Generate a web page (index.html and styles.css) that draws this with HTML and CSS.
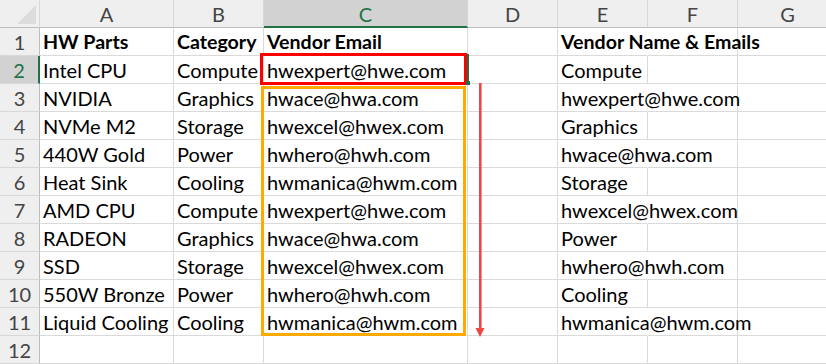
FILE: index.html
```html
<!DOCTYPE html>
<html>
<head>
<meta charset="utf-8">
<link rel="stylesheet" href="styles.css">
</head>
<body>
<div class="sheet">
  <div class="grid">
    <div class="hd corner"><span class="tri"></span></div>
    <div class="hd col">A</div>
    <div class="hd col">B</div>
    <div class="hd col sel">C</div>
    <div class="hd col">D</div>
    <div class="hd col">E</div>
    <div class="hd col">F</div>
    <div class="hd col last">G</div>

    <div class="hd row">1</div>
    <div class="c b">HW Parts</div><div class="c b">Category</div><div class="c b">Vendor Email</div><div class="c"></div><div class="c b ov">Vendor Name &amp; Emails</div><div class="c"></div><div class="c"></div>

    <div class="hd row rsel">2</div>
    <div class="c">Intel CPU</div><div class="c">Compute</div><div class="c">hwexpert@hwe.com</div><div class="c"></div><div class="c">Compute</div><div class="c"></div><div class="c"></div>

    <div class="hd row">3</div>
    <div class="c">NVIDIA</div><div class="c">Graphics</div><div class="c">hwace@hwa.com</div><div class="c"></div><div class="c ov">hwexpert@hwe.com</div><div class="c"></div><div class="c"></div>

    <div class="hd row">4</div>
    <div class="c">NVMe M2</div><div class="c">Storage</div><div class="c">hwexcel@hwex.com</div><div class="c"></div><div class="c">Graphics</div><div class="c"></div><div class="c"></div>

    <div class="hd row">5</div>
    <div class="c">440W Gold</div><div class="c">Power</div><div class="c">hwhero@hwh.com</div><div class="c"></div><div class="c ov">hwace@hwa.com</div><div class="c"></div><div class="c"></div>

    <div class="hd row">6</div>
    <div class="c">Heat Sink</div><div class="c">Cooling</div><div class="c">hwmanica@hwm.com</div><div class="c"></div><div class="c">Storage</div><div class="c"></div><div class="c"></div>

    <div class="hd row">7</div>
    <div class="c">AMD CPU</div><div class="c">Compute</div><div class="c">hwexpert@hwe.com</div><div class="c"></div><div class="c ov">hwexcel@hwex.com</div><div class="c"></div><div class="c"></div>

    <div class="hd row">8</div>
    <div class="c">RADEON</div><div class="c">Graphics</div><div class="c">hwace@hwa.com</div><div class="c"></div><div class="c">Power</div><div class="c"></div><div class="c"></div>

    <div class="hd row">9</div>
    <div class="c">SSD</div><div class="c">Storage</div><div class="c">hwexcel@hwex.com</div><div class="c"></div><div class="c ov">hwhero@hwh.com</div><div class="c"></div><div class="c"></div>

    <div class="hd row">10</div>
    <div class="c">550W Bronze</div><div class="c">Power</div><div class="c">hwhero@hwh.com</div><div class="c"></div><div class="c">Cooling</div><div class="c"></div><div class="c"></div>

    <div class="hd row">11</div>
    <div class="c">Liquid Cooling</div><div class="c">Cooling</div><div class="c">hwmanica@hwm.com</div><div class="c"></div><div class="c ov">hwmanica@hwm.com</div><div class="c"></div><div class="c"></div>

    <div class="hd row">12</div>
    <div class="c"></div><div class="c"></div><div class="c"></div><div class="c"></div><div class="c"></div><div class="c"></div><div class="c"></div>
  </div>

  <div class="sel-edge"></div>
  <div class="fill-handle"></div>
  <div class="box-red"></div>
  <div class="box-orange"></div>
  <svg class="arrow" width="12" height="256" viewBox="0 0 12 256">
    <rect x="5" y="0" width="2.6" height="246" fill="#f04646"/>
    <polygon points="1.5,245 10.5,245 6,254" fill="#f04646"/>
  </svg>
</div>
</body>
</html>
```

FILE: styles.css
```css
html, body {
  margin: 0;
  padding: 0;
  background: #ffffff;
}

.sheet {
  position: relative;
  width: 826px;
  height: 364px;
  overflow: hidden;
  font-family: Lato, "Carlito", "Liberation Sans", sans-serif;
}

.grid {
  display: grid;
  grid-template-columns: 40px 134px 90px 204px 90px 90px 90px 100px;
  grid-template-rows: 28px repeat(12, 28px);
}

.hd {
  box-sizing: border-box;
  background: #efefef;
  color: #444444;
  font-size: 20px;
  display: flex;
  align-items: center;
  justify-content: center;
}

.corner {
  position: relative;
  border-right: 1px solid #d8d8d8;
  border-bottom: 1px solid #bdbdbd;
}

.tri {
  position: absolute;
  right: 3px;
  bottom: 3px;
  width: 0;
  height: 0;
  border-left: 19px solid transparent;
  border-bottom: 19px solid #dcdcdc;
}

.col {
  border-right: 1px solid #d8d8d8;
  border-bottom: 1px solid #bdbdbd;
  padding-top: 1px;
}

.col.sel {
  background: #d2d2d2;
  color: #217346;
  border-bottom: 2px solid #217346;
}

.row {
  border-right: 1px solid #bdbdbd;
  border-bottom: 1px solid #d8d8d8;
  padding-top: 0;
}

.row.rsel {
  background: #d2d2d2;
  color: #217346;
  border-right: 2px solid #217346;
}

.c {
  box-sizing: border-box;
  border-right: 1px solid #dadada;
  border-bottom: 1px solid #dadada;
  font-size: 20px;
  color: #000000;
  padding: 1px 0 0 3px;
  line-height: 26px;
  white-space: nowrap;
  overflow: visible;
  position: relative;
  z-index: 1;
}

.c.b {
  font-weight: bold;
  font-size: 19.6px;
}

.c.ov {
  border-right-color: transparent;
  z-index: 2;
}

.box-red {
  position: absolute;
  left: 260px;
  top: 53px;
  width: 207px;
  height: 32px;
  box-sizing: border-box;
  border: 3px solid #ff0000;
  z-index: 3;
}

.sel-edge {
  position: absolute;
  left: 466px;
  top: 54px;
  width: 3px;
  height: 30px;
  background: #217346;
  z-index: 2;
}

.fill-handle {
  position: absolute;
  left: 466px;
  top: 81px;
  width: 4px;
  height: 4px;
  background: #217346;
  z-index: 4;
}

.box-orange {
  position: absolute;
  left: 261px;
  top: 86px;
  width: 205px;
  height: 250px;
  box-sizing: border-box;
  border: 3px solid #ffaa00;
  z-index: 3;
}

.arrow {
  position: absolute;
  left: 474px;
  top: 83px;
  z-index: 3;
}
```
